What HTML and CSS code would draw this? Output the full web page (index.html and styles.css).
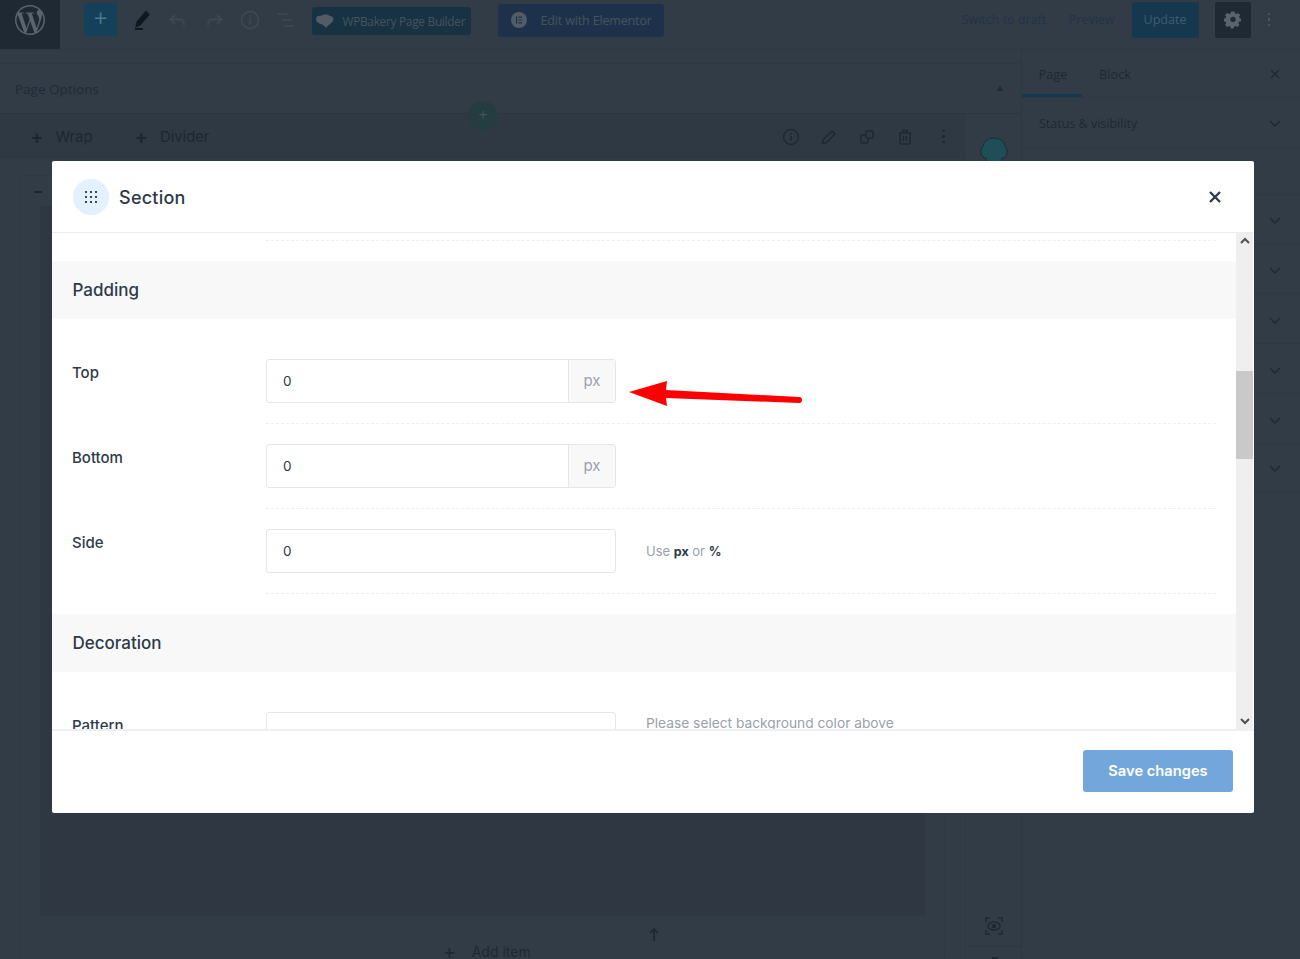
FILE: index.html
```html
<!DOCTYPE html>
<html lang="en">
<head>
<meta charset="utf-8">
<title>Section</title>
<link rel="stylesheet" href="styles.css">
</head>
<body>
<div class="page">
  <header class="topbar">
    <div class="wp-logo">
      <svg width="30" height="30" viewBox="0 0 24 24"><path fill="#596470" d="M21.469 6.825c.84 1.537 1.318 3.3 1.318 5.175 0 3.979-2.156 7.456-5.363 9.325l3.295-9.527c.615-1.54.82-2.771.82-3.864 0-.405-.026-.78-.07-1.11m-7.981.105c.647-.03 1.232-.105 1.232-.105.582-.075.514-.93-.067-.899 0 0-1.755.135-2.88.135-1.064 0-2.85-.15-2.85-.15-.585-.03-.661.855-.075.885 0 0 .54.061 1.125.09l1.68 4.605-2.37 7.08L5.354 6.9c.649-.03 1.234-.1 1.234-.1.585-.075.516-.93-.065-.896 0 0-1.746.138-2.874.138-.2 0-.438-.008-.69-.015C4.911 3.15 8.235 1.215 12 1.215c2.809 0 5.365 1.072 7.286 2.833-.046-.003-.091-.009-.141-.009-1.06 0-1.812.923-1.812 1.914 0 .89.513 1.643 1.06 2.531.411.72.89 1.643.89 2.977 0 .915-.354 1.994-.821 3.479l-1.075 3.585-3.9-11.61.001.014zM12 22.784c-1.059 0-2.081-.153-3.048-.437l3.237-9.406 3.315 9.087c.024.053.05.101.078.149-1.12.393-2.325.609-3.582.609M1.211 12c0-1.564.336-3.05.935-4.39L7.29 21.709C3.694 19.96 1.212 16.271 1.211 12M12 0C5.385 0 0 5.385 0 12s5.385 12 12 12 12-5.385 12-12S18.615 0 12 0"/></svg>
    </div>
    <div class="tools">
      <span class="add-btn">+</span>
      <svg class="tool" width="24" height="24" viewBox="0 0 24 24"><path d="M17 4l2.500 2.500-8.500 10-3.500 1.500.8-3.800zM6 21h8" stroke="#10181f" stroke-width="2" fill="#10181f"/></svg>
      <svg class="tool" width="24" height="24" viewBox="0 0 24 24" fill="none" stroke="#3f4a55" stroke-width="1.500"><path d="M9 7 4.500 11.500 9 16M4.500 11.500H14a4 4 0 0 1 4 4v2"/></svg>
      <svg class="tool" width="24" height="24" viewBox="0 0 24 24" fill="none" stroke="#3f4a55" stroke-width="1.500"><path d="M15 7l4.500 4.500L15 16M19.500 11.500H10a4 4 0 0 0-4 4v2"/></svg>
      <svg class="tool" width="24" height="24" viewBox="0 0 24 24" fill="none" stroke="#3f4a55" stroke-width="1.500"><circle cx="12" cy="12" r="8.500"/><path d="M12 10.500v6M12 7v2"/></svg>
      <svg class="tool" width="24" height="24" viewBox="0 0 24 24" fill="none" stroke="#3f4a55" stroke-width="1.500"><path d="M4 6h10M8 12h10M10 18h10"/></svg>
      <div class="wpb-btn">
        <svg width="20" height="16" viewBox="0 0 20 16"><path d="M1 6c0-3 3-4 5-3 2-2 7-2 9 0 3 0 4 3 3 5-2 3-5 4-7 7-1-2-3-3-5-4-3-1-5-2-5-5z" fill="#515c66"/></svg>
        <span>WPBakery Page Builder</span>
      </div>
      <div class="el-btn">
        <svg width="16" height="16" viewBox="0 0 16 16"><circle cx="8" cy="8" r="8" fill="#515c66"/><path d="M5 4.500h1.200v7H5zM7.500 4.500H11v1.200H7.500zM7.500 7.400H11v1.200H7.500zM7.500 10.300H11v1.200H7.500z" fill="#1d324a"/></svg>
        <span>Edit with Elementor</span>
      </div>
    </div>
    <div class="top-right">
      <span class="link first">Switch to draft</span>
      <span class="link">Preview</span>
      <span class="update">Update</span>
      <span class="gear">
        <svg width="18" height="18" viewBox="0 0 24 24"><path fill="#59636d" fill-rule="evenodd" d="M10 2h4l.6 2.800 1.800.8 2.400-1.500 2.800 2.800-1.500 2.400.8 1.800L22.700 11.700v3.600l-2.800.6-.8 1.800 1.500 2.400-2.800 2.800-2.400-1.500-1.800.8-.6 2.800h-4l-.6-2.800-1.800-.8-2.400 1.500-2.800-2.800 1.500-2.400-.8-1.800-2.800-.6v-3.600l2.800-.6.8-1.800-1.500-2.400 2.800-2.800 2.400 1.500 1.800-.8zM12 9a3.600 3.600 0 1 0 0 7.200A3.600 3.600 0 0 0 12 9z" transform="translate(0 -1.500)"/></svg>
      </span>
      <span class="kebab"><i></i><i></i><i></i></span>
    </div>
  </header>
  <div class="workspace">
    <main class="canvas">
      <div class="notice-strip"></div>
      <div class="options">
        <span>Page Options</span>
        <span class="caret"></span>
        <span class="round-add">+</span>
      </div>
      <div class="work-row">
        <div class="builder">
          <div class="builder-bar">
            <span class="b-add"><b>+</b>Wrap</span>
            <span class="b-add"><b>+</b>Divider</span>
            <div class="b-icons">
              <svg width="20" height="20" viewBox="0 0 20 20" fill="none" stroke="#1e2832" stroke-width="1.500"><circle cx="10" cy="10" r="7.500"/><path d="M10 9v5M10 6v1.500"/></svg>
              <svg width="20" height="20" viewBox="0 0 20 20" fill="none" stroke="#1e2832" stroke-width="1.500"><path d="M3.500 16.500l1-4L13 4l3 3-8.500 8.500z"/></svg>
              <svg width="20" height="20" viewBox="0 0 20 20" fill="none" stroke="#1e2832" stroke-width="1.500"><rect x="9" y="4" width="7" height="7" rx="1"/><path d="M8 8H5a1 1 0 0 0-1 1v6a1 1 0 0 0 1 1h5a1 1 0 0 0 1-1v-3"/></svg>
              <svg width="20" height="20" viewBox="0 0 20 20" fill="none" stroke="#1e2832" stroke-width="1.500"><path d="M5 6h10v9.500a1.500 1.500 0 0 1-1.500 1.500h-7A1.500 1.500 0 0 1 5 15.500zM8 6V3.500h4V6M8.500 9v5M11.500 9v5"/></svg>
              <span class="kebab dark"><i></i><i></i><i></i></span>
            </div>
          </div>
          <div class="builder-body">
            <div class="outline">
              <div class="outline-head"><span class="minus"></span></div>
              <div class="dropzone"></div>
              <div class="footer-row">
                <svg class="up-arrow" width="12" height="14" viewBox="0 0 12 14" fill="none" stroke="#1e2832" stroke-width="1.800"><path d="M6 14V2M2 6l4-4 4 4"/></svg>
                <span class="add-item"><b>+</b>Add item</span>
              </div>
            </div>
          </div>
        </div>
        <aside class="rail">
          <svg class="muffin" width="28" height="30" viewBox="0 0 28 30"><path d="M6 21H4C0 18 0 12 3 9.500 3.500 4 9 1 14 1s10.500 3 11 8.500c3 2.500 3 8.500-1 11.500h-2l-1 8H7z" fill="#1e4f58" stroke="#1b2a33"/></svg>
          <svg class="eye" width="20" height="20" viewBox="0 0 20 20" fill="none" stroke="#1e2832" stroke-width="1.500"><path d="M2 6V2h4M14 2h4v4M18 14v4h-4M6 18H2v-4"/><ellipse cx="10" cy="10" rx="6" ry="4"/><circle cx="10" cy="10" r="1.500" fill="#1e2832"/></svg>
          <span class="rail-line"></span>
        </aside>
      </div>
    </main>
    <aside class="sidebar">
      <div class="tabs">
        <span class="tab on">Page</span>
        <span class="tab">Block</span>
        <svg class="tab-x" width="12" height="12" viewBox="0 0 12 12" stroke="#1e2832" stroke-width="1.300"><path d="M2 2l8 8M10 2l-8 8"/></svg>
      </div>
      <div class="panel h50"><span>Status &amp; visibility</span><svg class="chev" width="12" height="7" viewBox="0 0 12 7" fill="none" stroke="#1e2832" stroke-width="1.300"><path d="M1 1l5 5 5-5"/></svg></div>
      <div class="panel h47"></div>
      <div class="panel h49"><svg class="chev" width="12" height="7" viewBox="0 0 12 7" fill="none" stroke="#1e2832" stroke-width="1.300"><path d="M1 1l5 5 5-5"/></svg></div>
      <div class="panel"><svg class="chev" width="12" height="7" viewBox="0 0 12 7" fill="none" stroke="#1e2832" stroke-width="1.300"><path d="M1 1l5 5 5-5"/></svg></div>
      <div class="panel"><svg class="chev" width="12" height="7" viewBox="0 0 12 7" fill="none" stroke="#1e2832" stroke-width="1.300"><path d="M1 1l5 5 5-5"/></svg></div>
      <div class="panel"><svg class="chev" width="12" height="7" viewBox="0 0 12 7" fill="none" stroke="#1e2832" stroke-width="1.300"><path d="M1 1l5 5 5-5"/></svg></div>
      <div class="panel"><svg class="chev" width="12" height="7" viewBox="0 0 12 7" fill="none" stroke="#1e2832" stroke-width="1.300"><path d="M1 1l5 5 5-5"/></svg></div>
      <div class="panel h49 last"><svg class="chev" width="12" height="7" viewBox="0 0 12 7" fill="none" stroke="#1e2832" stroke-width="1.300"><path d="M1 1l5 5 5-5"/></svg></div>
    </aside>
  </div>
</div>

<section class="modal">
  <header class="m-head">
    <span class="m-ico">
      <svg width="14" height="14" viewBox="0 0 14 14" fill="#3a4655"><rect x="1" y="1" width="2" height="2"/><rect x="6" y="1" width="2" height="2"/><rect x="11" y="1" width="2" height="2"/><rect x="1" y="6" width="2" height="2"/><rect x="6" y="6" width="2" height="2"/><rect x="11" y="6" width="2" height="2"/><rect x="1" y="11" width="2" height="2"/><rect x="6" y="11" width="2" height="2"/><rect x="11" y="11" width="2" height="2"/></svg>
    </span>
    <h2>Section</h2>
    <svg class="m-close" width="14" height="14" viewBox="0 0 14 14" stroke="#2f3b4a" stroke-width="2.400"><path d="M2 2l10 10M12 2L2 12"/></svg>
  </header>
  <div class="m-body">
    <div class="m-scroll">
      <div class="spacer-top"><div class="dash"></div></div>
      <h3 class="sec-title">Padding</h3>
      <div class="rows">
        <div class="row">
          <label>Top</label>
          <div class="field"><span class="val">0</span><span class="unit">px</span></div>
        </div>
        <div class="row">
          <label>Bottom</label>
          <div class="field"><span class="val">0</span><span class="unit">px</span></div>
        </div>
        <div class="row">
          <label>Side</label>
          <div class="field"><span class="val">0</span></div>
          <p class="hint">Use <b>px</b> or <b>%</b></p>
        </div>
      </div>
      <h3 class="sec-title">Decoration</h3>
      <div class="rows pattern">
        <div class="row">
          <label>Pattern</label>
          <div class="field"></div>
          <p class="hint long">Please select background color above</p>
        </div>
      </div>
    </div>
    <div class="scrollbar">
      <svg width="10" height="7" viewBox="0 0 10 7" fill="none" stroke="#505050" stroke-width="2"><path d="M1 6l4-4 4 4"/></svg>
      <span class="thumb"></span>
      <svg class="sb-down" width="10" height="7" viewBox="0 0 10 7" fill="none" stroke="#505050" stroke-width="2"><path d="M1 1l4 4 4-4"/></svg>
    </div>
  </div>
  <footer class="m-foot"><span class="save">Save changes</span></footer>
</section>
<svg class="arrow" width="178" height="30" viewBox="0 0 178 30"><path d="M2 13 40 2l-1 9 133 7a3 3 0 0 1 0 6L39 19l1 8z" fill="#fe0000"/></svg>
</body>
</html>
```
FILE: styles.css
```css
* { box-sizing: border-box; }
html, body { margin: 0; height: 959px; overflow: hidden; }
body { background: #323c47; font-family: "Open Sans", sans-serif; position: relative; color: #1f2a36; }
.page { height: 959px; display: flex; flex-direction: column; overflow: hidden; }
.topbar { height: 50px; display: flex; align-items: flex-start; border-bottom: 1px solid #2e3842; flex: none; }
.wp-logo { width: 60px; height: 49px; background: #1f2933; display: flex; align-items: center; justify-content: center; padding-bottom: 10px; flex: none; }
.tools { display: flex; align-items: center; padding-left: 24px; height: 36px; margin-top: 2px; }
.add-btn { width: 33px; height: 33px; background: #14405a; color: #4d7690; font-size: 24px; line-height: 30px; text-align: center; margin-top: -1px; }
.tool { margin-left: 12.300px; flex: none; }
.wpb-btn { display: flex; align-items: center; gap: 7px; height: 28px; width: 159px; margin-left: 14px; padding-left: 3px; background: #173243; border-radius: 3px; font-size: 11.800px; letter-spacing: -.25px; color: #46525e; white-space: nowrap; margin-top: 2px; }
.el-btn { display: flex; align-items: center; gap: 13px; height: 33px; width: 166px; margin-left: 27px; padding-left: 13px; background: #1d324a; border-radius: 3px; font-size: 12.500px; letter-spacing: -.15px; color: #47525e; white-space: nowrap; }
.top-right { margin-left: auto; display: flex; align-items: center; height: 37px; margin-top: 1px; color: #1e3347; font-size: 12.500px; }
.link { margin-right: 24px; white-space: nowrap; color: #203347; }
.link.first { margin-right: 22.500px; }
.update { width: 67px; height: 36px; background: #15384e; border-radius: 2px; color: #3f5c70; display: flex; align-items: center; justify-content: center; margin-left: -7px; }
.gear { width: 36px; height: 36px; background: #1f2933; border-radius: 2px; margin-left: 16px; display: flex; align-items: center; justify-content: center; }
.kebab { display: flex; flex-direction: column; gap: 3px; margin: 0 30px 0 17px; }
.kebab i { width: 2.500px; height: 2.500px; border-radius: 50%; background: #515c66; display: block; }
.kebab.dark { margin: 0 20.500px 0 9px; }
.kebab.dark i { background: #1e2832; }

.workspace { flex: 1; display: flex; min-height: 0; }
.canvas { width: 1021px; flex: none; display: flex; flex-direction: column; }
.notice-strip { height: 14px; border-bottom: 1px solid #2e3842; flex: none; }
.options { height: 50px; flex: none; padding: 0 18px 0 15px; display: flex; align-items: center; font-size: 13.500px; color: #1e2a36; position: relative; border-bottom: 1px solid #2c3640; }
.caret { margin-left: auto; width: 0; height: 0; border: 3.500px solid transparent; border-bottom: 6px solid #1e2a36; border-top: 0; margin-top: -1px; }
.round-add { position: absolute; left: 468px; top: 37px; width: 30px; height: 30px; border-radius: 50%; background: #253d40; color: #3f5558; text-align: center; line-height: 29px; font-size: 16px; z-index: 1; }
.work-row { flex: 1; display: flex; min-height: 0; }
.builder { width: 965px; flex: none; display: flex; flex-direction: column; }
.builder-bar { height: 45px; display: flex; align-items: center; padding-left: 30px; gap: 42px; font-family: "Inter", sans-serif; font-size: 14.800px; color: #1c2631; flex: none; background: #2f3943; }
.b-add b { font-weight: 600; font-size: 20px; margin-right: 12px; vertical-align: -2px; color: #1c2631; }
.b-icons { margin-left: auto; display: flex; align-items: center; gap: 18px; }
.builder-body { flex: 1; padding: 16px 20px 0 20px; min-height: 0; }
.outline { height: 900px; border-left: 1px dotted #2c3640; border-right: 1px dotted #2c3640; border-top: 1px dotted #2c3640; }
.outline-head { height: 30px; padding: 15px 0 0 13px; }
.minus { display: block; width: 8px; height: 2px; background: #1c2631; }
.dropzone { height: 710px; margin: 0 19px; background: #2f3842; }
.footer-row { display: flex; flex-direction: column; padding-top: 11px; }
.up-arrow { margin-left: 627px; flex: none; }
.add-item { font-family: "Inter", sans-serif; font-size: 14px; line-height: 20px; color: #1e2832; margin: 1px 0 0 422px; white-space: nowrap; }
.add-item b { font-size: 19px; font-weight: 500; margin-right: 16px; vertical-align: -1px; }
.rail { width: 56px; flex: none; position: relative; border-left: 1px solid #2f3943; }
.muffin { position: absolute; left: 14px; top: 23px; }
.eye { position: absolute; left: 18px; top: 802px; }
.rail-line { position: absolute; left: 3px; right: 0; top: 832px; border-top: 1px solid #2c3640; }
.rail-line::after { content: ""; position: absolute; left: 23px; top: 10px; width: 6px; height: 2px; background: #1e2832; }
.sidebar { flex: 1; display: flex; flex-direction: column; border-left: 1px solid #2e3842; }
.tabs { height: 48px; display: flex; align-items: center; font-size: 12.800px; color: #1d2833; position: relative; flex: none; border-bottom: 1px solid #2e3842; }
.tab { width: 60px; height: 47px; display: flex; align-items: center; justify-content: center; padding-left: 2px; }
.tab.on { box-shadow: inset 0 -3px 0 #14384e; }
.tab:nth-child(2) { width: 64px; }
.tab-x { position: absolute; right: 19px; top: 18px; }
.panel { height: 50px; display: flex; align-items: center; padding: 3px 19px 0 17px; font-size: 12.500px; color: #1d2833; border-bottom: 1px solid #2e3842; flex: none; }
.panel.h50 { height: 50px; padding-top: 1px; }
.panel.h47 { height: 47px; }
.panel.h49 { height: 49px; }
.panel.last { padding-top: 0; }
.chev { margin-left: auto; }

.modal { position: absolute; left: 52px; top: 161px; width: 1202px; height: 652px; background: #fff; border-radius: 2px; display: flex; flex-direction: column; font-family: "Inter", sans-serif; color: #2e3a49; }
.m-head { height: 72px; flex: none; display: flex; align-items: center; padding: 0 32px 0 21px; border-bottom: 1px solid #e9ecf2; }
.m-ico { width: 36px; height: 36px; border-radius: 50%; background: #e3f0fd; display: flex; align-items: center; justify-content: center; }
h2 { margin: 2px 0 0 10px; font-size: 18px; font-weight: 500; line-height: 28px; letter-spacing: .25px; }
.m-close { margin-left: auto; }
.m-body { flex: 1; min-height: 0; display: flex; padding-right: 1px; overflow: hidden; }
.m-scroll { flex: 1; min-width: 0; overflow: hidden; }
.spacer-top { height: 28px; padding: 7px 20px 0 214px; }
.dash { border-top: 1px dashed #eceef0; }
.sec-title { margin: 0; height: 58px; line-height: 59px; padding-left: 20.500px; background: #f8f8f8; font-size: 17px; font-weight: 500; }
.rows { padding: 40px 20px 0 20px; }
.row { display: flex; align-items: flex-start; height: 85px; position: relative; }
.row + .row::before { content: ""; position: absolute; left: 194px; right: 0; top: -21px; border-top: 1px dashed #eceef0; }
.row:last-child::after { content: ""; position: absolute; left: 194px; right: 0; top: 64px; border-top: 1px dashed #eceef0; }
.pattern .row::after { display: none; }
.row label { width: 194px; flex: none; font-size: 15px; font-weight: 500; line-height: 28px; color: #2e3a49; }
.field { width: 350px; height: 44px; flex: none; display: flex; background: #fff; border: 1px solid #e3e6ea; border-radius: 3px; }
.val { flex: 1; padding-left: 16px; line-height: 42px; font-size: 13.500px; color: #2e3a49; }
.unit { width: 47px; background: #f8f8f8; border-left: 1px solid #e3e6ea; text-align: center; line-height: 42px; font-size: 15px; color: #9aa1ab; }
.hint { margin: 0 0 0 30px; line-height: 44px; font-size: 13px; color: #9aa1ab; white-space: nowrap; }
.hint b { color: #2e3a49; font-weight: 700; font-size: 12.500px; }
.hint.long { line-height: 22px; font-size: 13.750px; }
.scrollbar { width: 17px; flex: none; background: #efefef; position: relative; display: flex; justify-content: center; padding-top: 4px; }
.thumb { position: absolute; left: 0; top: 138px; width: 17px; height: 88px; background: #c9c9c9; }
.sb-down { position: absolute; left: 3.500px; bottom: 4px; }
.m-foot { height: 84px; flex: none; border-top: 2px solid #edeff3; display: flex; align-items: flex-start; justify-content: flex-end; padding: 19px 21px 0 0; }
.save { width: 150px; height: 42px; background: #73a7db; border-radius: 3px; color: #fff; font-size: 14.700px; font-weight: 600; display: flex; align-items: center; justify-content: center; }
.arrow { position: absolute; left: 627px; top: 379px; }
```
